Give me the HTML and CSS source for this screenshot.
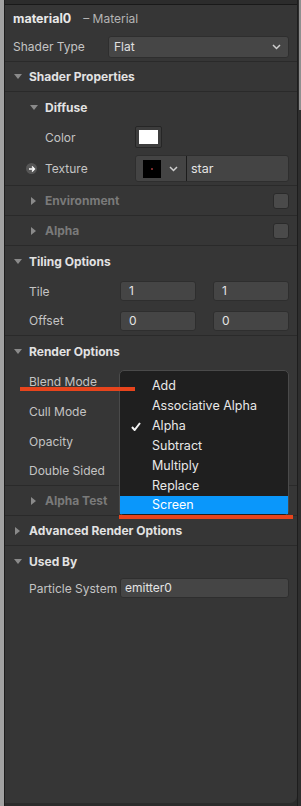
FILE: index.html
```html
<!DOCTYPE html>
<html lang="en">
<head>
    <meta charset="UTF-8">
    <meta name="viewport" content="width=device-width, initial-scale=1.0">
    <title>material0 - Material</title>
    <link rel="stylesheet" href="styles.css">
</head>
<body>
    <div class="screen">
        <div class="side-left"></div>

        <div class="window">
            <div class="topbar"></div>

            <div class="panel">
                <!-- Title -->
                <div class="title">
                    <span class="name">material0</span>
                    <span class="kind">&ndash; Material</span>
                </div>

                <div class="row top-row line">
                    <span class="label">Shader Type</span>
                    <div class="select">
                        <span>Flat</span>
                        <svg class="chev" width="9" height="6" viewBox="0 0 9 6"><path d="M1 1l3.5 3.5L8 1" fill="none" stroke="#cfcfcf" stroke-width="1.5"/></svg>
                    </div>
                </div>

                <!-- Shader Properties -->
                <div class="section lvl1 line">
                    <span class="tri down"></span>Shader Properties
                </div>

                <div class="section lvl2">
                    <span class="tri down"></span>Diffuse
                </div>
                <div class="row lvl2-row">
                    <span class="label">Color</span>
                    <div class="swatch"><span></span></div>
                </div>
                <div class="row lvl2-row tex-row line">
                    <span class="link-icon">
                        <svg width="10" height="10" viewBox="0 0 10 10"><path d="M2 5h5.5M5 2.5L7.5 5 5 7.5" fill="none" stroke="#fff" stroke-width="1.3"/></svg>
                    </span>
                    <span class="label">Texture</span>
                    <div class="texture">
                        <div class="tex-pick">
                            <span class="thumb"><i></i></span>
                            <svg class="chev" width="9" height="6" viewBox="0 0 9 6"><path d="M1 1l3.5 3.5L8 1" fill="none" stroke="#cfcfcf" stroke-width="1.5"/></svg>
                        </div>
                        <div class="tex-name">star</div>
                    </div>
                </div>

                <div class="section lvl2 off line">
                    <span class="tri right"></span>Environment
                    <span class="check"></span>
                </div>
                <div class="section lvl2 off line">
                    <span class="tri right"></span>Alpha
                    <span class="check"></span>
                </div>

                <!-- Tiling -->
                <div class="section lvl1">
                    <span class="tri down"></span>Tiling Options
                </div>
                <div class="row lvl1-row">
                    <span class="label">Tile</span>
                    <div class="pair">
                        <div class="input">1</div>
                        <div class="input">1</div>
                    </div>
                </div>
                <div class="row lvl1-row line">
                    <span class="label">Offset</span>
                    <div class="pair">
                        <div class="input">0</div>
                        <div class="input">0</div>
                    </div>
                </div>

                <!-- Render -->
                <div class="section lvl1">
                    <span class="tri down"></span>Render Options
                </div>
                <div class="row lvl1-row blend-row">
                    <span class="label">Blend Mode</span>
                    <span class="mark mark-label"></span>
                    <div class="menu">
                        <div class="item">Add</div>
                        <div class="item">Associative Alpha</div>
                        <div class="item checked">
                            <svg class="tick" width="10" height="9" viewBox="0 0 10 9"><path d="M1 5l2.6 3L9 1" fill="none" stroke="#f2f2f2" stroke-width="2"/></svg>
                            Alpha
                        </div>
                        <div class="item">Subtract</div>
                        <div class="item">Multiply</div>
                        <div class="item">Replace</div>
                        <div class="item active">Screen</div>
                        <span class="mark mark-item"></span>
                    </div>
                </div>
                <div class="row lvl1-row">
                    <span class="label">Cull Mode</span>
                </div>
                <div class="row lvl1-row">
                    <span class="label">Opacity</span>
                </div>
                <div class="row lvl1-row line">
                    <span class="label">Double Sided</span>
                </div>
                <div class="section lvl2 off line">
                    <span class="tri right"></span>Alpha Test
                </div>

                <div class="section lvl1 line">
                    <span class="tri right"></span>Advanced Render Options
                </div>

                <!-- Used by -->
                <div class="section lvl1">
                    <span class="tri down"></span>Used By
                </div>
                <div class="row lvl1-row used-row">
                    <span class="label">Particle System</span>
                    <div class="input full">emitter0</div>
                </div>
            </div>
        </div>

        <div class="side-right">
            <span class="thumb-bar"></span>
        </div>
    </div>
</body>
</html>
```

FILE: styles.css
```css
/* General styles */
body {
    margin: 0;
    padding: 0;
    background-color: #2b2b2b;
    font-family: Inter, "Noto Sans", sans-serif;
    font-size: 12px;
    color: #c6c6c6;
}

.screen {
    display: flex;
    height: 806px;
    overflow: hidden;
}

.side-left {
    width: 4px;
    background-color: #a2a2a2;
    border-right: 1px solid #1d1d1d;
}

.side-right {
    width: 3px;
    border-left: 1px solid #1d1d1d;
    background-color: #2e2e2e;
}

.thumb-bar {
    display: block;
    height: 110px;
    margin-left: 1px;
    background-color: #8f8f8f;
}

.window {
    flex: 1;
    display: flex;
    flex-direction: column;
}

.topbar {
    height: 4px;
    background-color: #2c2c2c;
    border-bottom: 1px solid #191919;
}

/* Panel */
.panel {
    position: relative;
    height: 798px;
    background-color: #363636;
    border-bottom-right-radius: 7px;
}

.title {
    display: flex;
    align-items: center;
    height: 27px;
    padding-left: 8px;
}

.title .name {
    font-weight: 700;
    font-size: 12.5px;
    color: #e8e8e8;
    margin-right: 12px;
}

.title .kind {
    color: #b4b4b4;
}

.row {
    display: flex;
    align-items: center;
    height: 30px;
    padding-right: 8px;
    box-sizing: border-box;
}

.line {
    border-bottom: 1px solid #2a2a2a;
}

.label {
    flex: none;
    color: #c4c4c4;
}

.top-row {
    padding-left: 8px;
}

.top-row .label {
    width: 95px;
}

.lvl1-row {
    padding-left: 24px;
}

.lvl1-row .label {
    width: 91px;
}

.lvl2-row {
    padding-left: 40px;
}

.lvl2-row .label {
    width: 90px;
}

/* Section headers */
.section {
    display: flex;
    align-items: center;
    height: 30px;
    padding-right: 8px;
    box-sizing: border-box;
    font-weight: 700;
    color: #e2e2e2;
}

.section.lvl1 {
    padding-left: 8px;
}

.section.lvl2 {
    padding-left: 24px;
}

.section.off {
    color: #7a7a7a;
}

.tri {
    width: 16px;
    flex: none;
    display: flex;
    align-items: center;
}

.tri::before {
    content: "";
    display: block;
    border-style: solid;
    border-color: transparent;
}

.tri.down::before {
    margin-left: 1px;
    border-width: 5px 4px 0 4px;
    border-top-color: #8a8a8a;
}

.tri.right::before {
    margin-left: 2px;
    border-width: 4px 0 4px 5px;
    border-left-color: #8a8a8a;
}

.check {
    margin-left: auto;
    width: 14px;
    height: 14px;
    border: 1px solid #2a2a2a;
    border-radius: 3px;
    background-color: #4a4a4a;
}

/* Controls */
.select {
    flex: 1;
    display: flex;
    align-items: center;
    justify-content: space-between;
    height: 20px;
    padding: 0 7px 0 5px;
    border: 1px solid #2e2e2e;
    border-radius: 3px;
    background-color: #464646;
    color: #e0e0e0;
}

.swatch {
    width: 27px;
    height: 22px;
    box-sizing: border-box;
    padding: 3px;
    border: 1px solid #262626;
    border-radius: 2px;
    background-color: #3d3d3d;
}

.swatch span {
    display: block;
    height: 100%;
    background-color: #fff;
}

.tex-row {
    height: 34px;
    padding-left: 21px;
}

.link-icon {
    width: 11px;
    height: 11px;
    margin-right: 8px;
    border-radius: 50%;
    background-color: #565656;
    display: flex;
    align-items: center;
    justify-content: center;
}

.texture {
    flex: 1;
    display: flex;
    height: 25px;
    border: 1px solid #2e2e2e;
    border-radius: 3px;
    background-color: #444;
    overflow: hidden;
}

.tex-pick {
    display: flex;
    align-items: center;
    width: 51px;
    padding-left: 7px;
    box-sizing: border-box;
    border-right: 1px solid #1c1c1c;
}

.thumb {
    width: 18px;
    height: 18px;
    background-color: #000;
    display: flex;
    align-items: center;
    justify-content: center;
    margin-right: 8px;
}

.thumb i {
    width: 2px;
    height: 2px;
    background-color: #7a2a2a;
}

.tex-name {
    flex: 1;
    padding-left: 4px;
    line-height: 25px;
    color: #e4e4e4;
    font-size: 12.5px;
}

.pair {
    flex: 1;
    display: flex;
    justify-content: space-between;
}

.input {
    width: 76px;
    height: 20px;
    box-sizing: border-box;
    padding-left: 8px;
    line-height: 18px;
    border: 1px solid #2e2e2e;
    border-radius: 3px;
    background-color: #454545;
    color: #e4e4e4;
}

.input.full {
    flex: 1;
    padding-left: 4px;
}

.used-row {
    height: 24px;
}

/* Popup menu over the render options */
.blend-row {
    position: relative;
}

.menu {
    position: absolute;
    top: 4px;
    left: 114px;
    width: 170px;
    box-sizing: border-box;
    padding: 5px 0 1px;
    border: 1px solid #4a4a4a;
    border-radius: 5px;
    background-color: #1f1f1f;
    z-index: 2;
}

.item {
    position: relative;
    height: 20px;
    line-height: 20px;
    padding-left: 32px;
    color: #e8e8e8;
    font-size: 12.5px;
}

.item .tick {
    position: absolute;
    left: 11px;
    top: 6px;
}

.item.active {
    background-color: #0a97fb;
    color: #fff;
    height: 18px;
    line-height: 18px;
}

/* Red annotation strokes */
.mark {
    position: absolute;
    height: 4px;
    background-color: #e7441c;
    z-index: 3;
}

.mark-label {
    left: 15px;
    top: 21px;
    width: 115px;
}

.mark-item {
    left: -1px;
    bottom: -4px;
    width: 174px;
}
```
